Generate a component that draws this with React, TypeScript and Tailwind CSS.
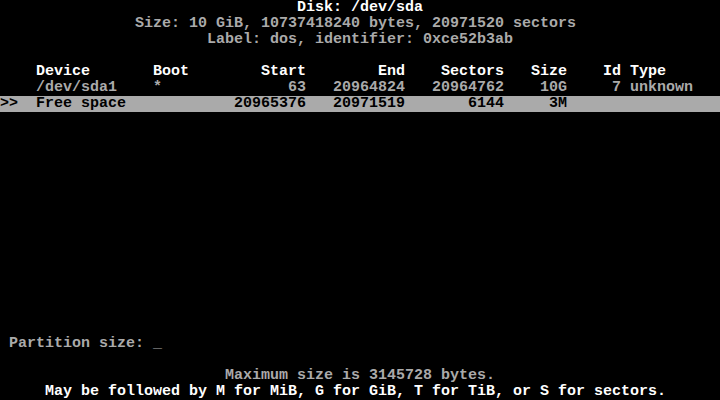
import React from "react";

const W = "text-white";
const G = "text-[#aaaaaa]";

type Line = { text: string; cls?: string; hl?: boolean };

// build a line by placing strings at columns; negative-right alignment via "end" column
const build = (items: [string, number, ("l" | "r")?][]) => {
  const arr: string[] = Array(80).fill(" ");
  for (const [s, c, a] of items) {
    const start = a === "r" ? c - s.length + 1 : c;
    for (let i = 0; i < s.length; i++) arr[start + i] = s[i];
  }
  return arr.join("").replace(/\s+$/, "");
};

const lines: Line[] = [
  { text: build([["Disk: /dev/sda", 33]]), cls: W },
  { text: build([["Size: 10 GiB, 10737418240 bytes, 20971520 sectors", 15]]), cls: G },
  { text: build([["Label: dos, identifier: 0xce52b3ab", 23]]), cls: G },
  { text: "" },
  {
    text: build([
      ["Device", 4],
      ["Boot", 17],
      ["Start", 33, "r"],
      ["End", 44, "r"],
      ["Sectors", 55, "r"],
      ["Size", 62, "r"],
      ["Id", 68, "r"],
      ["Type", 70],
    ]),
    cls: W,
  },
  {
    text: build([
      ["/dev/sda1", 4],
      ["*", 17],
      ["63", 33, "r"],
      ["20964824", 44, "r"],
      ["20964762", 55, "r"],
      ["10G", 62, "r"],
      ["7", 68, "r"],
      ["unknown", 70],
    ]),
    cls: G,
  },
  {
    text: build([
      [">>", 0],
      ["Free space", 4],
      ["20965376", 33, "r"],
      ["20971519", 44, "r"],
      ["6144", 55, "r"],
      ["3M", 62, "r"],
    ]),
    hl: true,
  },
];

export default function App() {
  const blank = 21 - lines.length;
  return (
    <div
      className="w-[720px] h-[400px] bg-black overflow-hidden text-[15px] leading-[16px] font-bold"
      style={{ fontFamily: '"Liberation Mono", "DejaVu Sans Mono", monospace' }}
    >
      {lines.map((l, i) => (
        <div
          key={i}
          className={`h-[16px] whitespace-pre ${l.hl ? "bg-[#aaaaaa] text-black" : l.cls ?? ""}`}
        >
          {l.text}
        </div>
      ))}
      {Array.from({ length: blank }).map((_, i) => (
        <div key={"b" + i} className="h-[16px]" />
      ))}
      <div className="h-[16px] whitespace-pre text-[#aaaaaa]">{" Partition size: _"}</div>
      <div className="h-[16px]" />
      <div className="h-[16px] whitespace-pre text-[#aaaaaa]">
        {build([["Maximum size is 3145728 bytes.", 25]])}
      </div>
      <div className="h-[16px] whitespace-pre text-white">
        {build([["May be followed by M for MiB, G for GiB, T for TiB, or S for sectors.", 5]])}
      </div>
    </div>
  );
}
